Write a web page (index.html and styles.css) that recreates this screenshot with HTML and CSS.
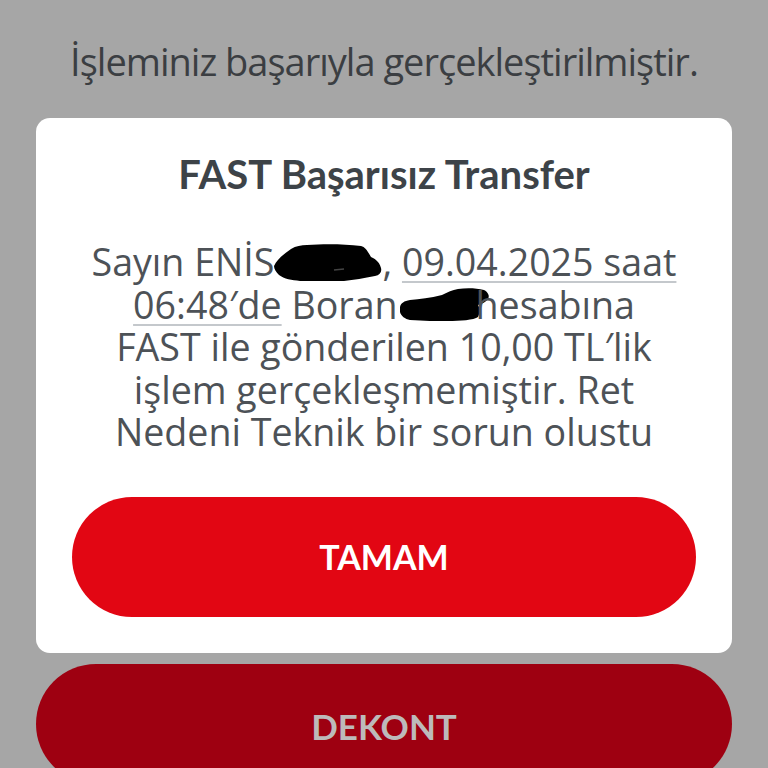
FILE: index.html
```html
<!DOCTYPE html>
<html lang="tr">
<head>
<meta charset="utf-8">
<title>FAST Başarısız Transfer</title>
<link rel="stylesheet" href="styles.css">
</head>
<body>
<div class="screen">
  <p class="status">İşleminiz başarıyla gerçekleştirilmiştir.</p>
  <div class="card">
    <h1 class="title">FAST Başarısız Transfer</h1>
    <p class="message">Sayın ENİS<svg class="blob blob-one" width="108" height="37" viewBox="0 0 108 37"><path d="M0 22 C3 16 7 12 17 5 C22 2 27 1 33 1 C50 0 70 0 87 2 C91 3 93 6 97 13 C101 15 105 17 107 24 C108 28 106 31 101 32 C90 34 80 36 70 37 C52 37 38 37 26 37 C18 36 10 35 5 31 C2 28 0 25 0 22 Z" fill="#000"/><path d="M60 26 L70 25" stroke="#444" stroke-width="1.5"/></svg>, <span class="uline">09.04.2025 saat</span><br><span class="uline">06:48′de</span> Boran<svg class="blob blob-two" width="90" height="34" viewBox="0 0 90 34"><path d="M0 19 C1 15 4 13 10 12 C20 11 30 10 42 7 C48 4 52 2 58 1 C66 0 76 0 84 2 C88 4 90 8 88 11 C86 14 82 16 78 17 C80 20 80 25 78 29 C74 32 60 33 48 33 C36 33 24 33 10 32 C5 31 1 28 0 24 Z" fill="#000"/></svg>hesabına<br>FAST ile gönderilen 10,00 TL′lik<br>işlem gerçekleşmemiştir. Ret<br>Nedeni Teknik bir sorun olustu</p>
    <button class="btn btn-primary" type="button">TAMAM</button>
  </div>
  <button class="btn btn-secondary" type="button">DEKONT</button>
</div>
</body>
</html>
```
FILE: styles.css
```css
html, body {
  margin: 0;
  padding: 0;
}
body {
  background: #a6a6a6;
  width: 768px;
  height: 768px;
  overflow: hidden;
  font-family: "Open Sans", "Noto Sans", sans-serif;
}
.screen {
  display: flex;
  flex-direction: column;
  padding: 37px 36px 0;
}
.status {
  margin: 0;
  text-align: center;
  font-size: 38px;
  font-weight: 380;
  letter-spacing: -1px;
  line-height: 48px;
  color: #3b3e42;
  white-space: nowrap;
}
.card {
  margin-top: 33px;
  background: #ffffff;
  border-radius: 14px;
  padding: 33px 36px 36px;
  display: flex;
  flex-direction: column;
  align-items: stretch;
}
.title {
  margin: 0;
  text-align: center;
  font-family: Lato, "Open Sans", sans-serif;
  font-weight: 700;
  font-size: 40px;
  line-height: 47px;
  color: #3d4348;
}
.message {
  margin: 43px 0 0;
  text-align: center;
  font-size: 37.6px;
  font-weight: 380;
  line-height: 42.5px;
  color: #4d5257;
  white-space: nowrap;
}
.uline {
  text-decoration: underline;
  text-decoration-color: #c4c8cc;
  text-decoration-thickness: 2px;
  text-underline-offset: 5px;
}
.blob {
  display: inline-block;
}
.blob-one {
  vertical-align: -5px;
}
.blob-two {
  vertical-align: -3px;
  margin-left: 2px;
  margin-right: -14px;
}
.btn {
  border: none;
  font-family: Lato, "Open Sans", sans-serif;
  font-weight: 700;
  height: 120px;
  border-radius: 60px;
  padding: 0;
}
.btn-primary {
  margin-top: 43px;
  font-size: 34px;
  background: #e20613;
  color: #ffffff;
}
.btn-secondary {
  margin-top: 11px;
  font-size: 35px;
  padding-top: 4px;
  background: #9e0011;
  color: #bdbaba;
}
```
